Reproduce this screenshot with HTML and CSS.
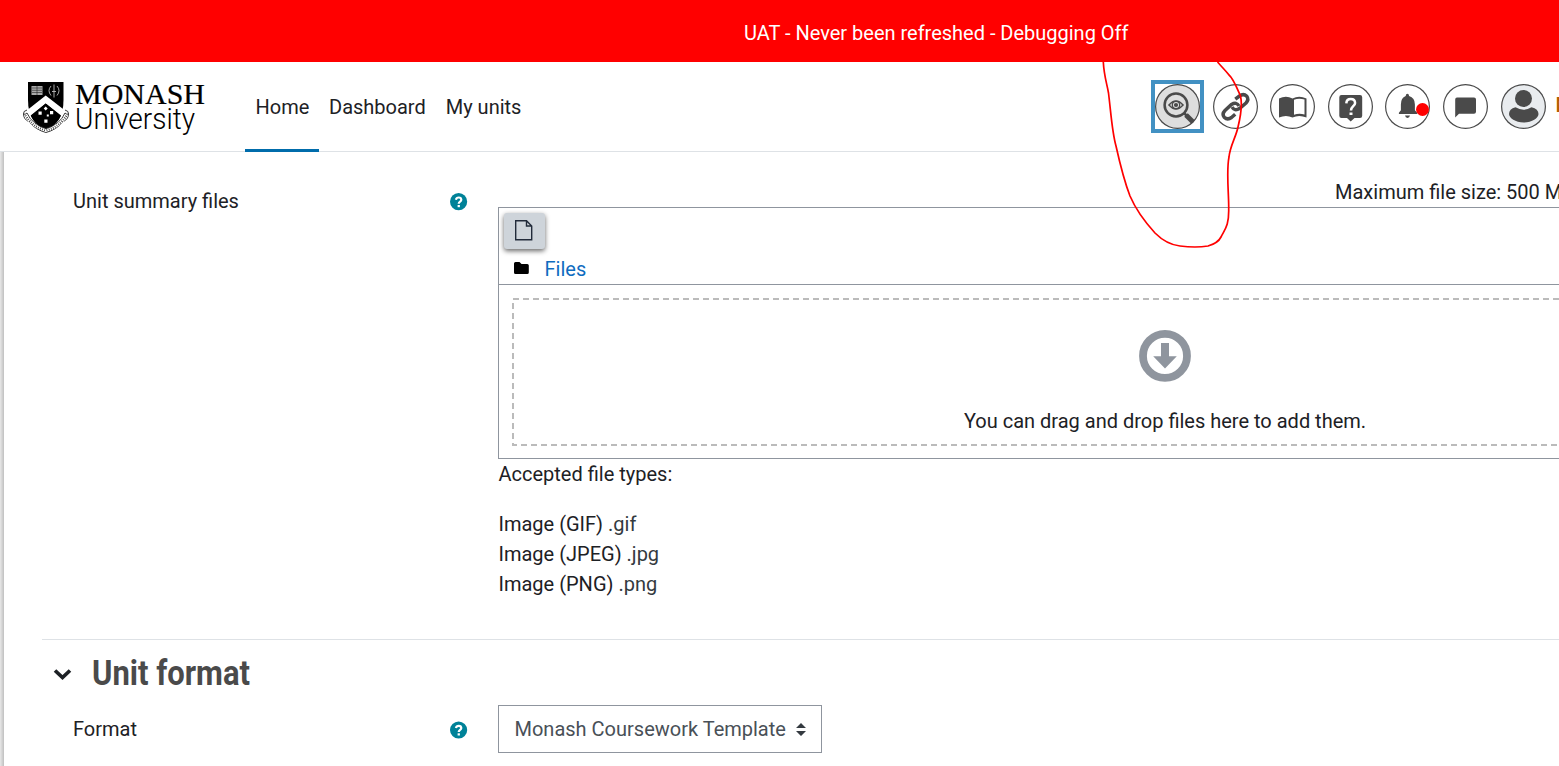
FILE: index.html
```html
<!DOCTYPE html>
<html lang="en">
<head>
<meta charset="utf-8">
<title>Edit unit settings</title>
<link rel="stylesheet" href="styles.css">
</head>
<body>
<div class="banner"><span>UAT - Never been refreshed - Debugging Off</span></div>
<header class="navbar">
  <svg class="logo" width="184" height="56" viewBox="22 80 184 56" role="img" aria-label="Monash University">
    <path d="M28 82h35.500v18c0 17-7 25-17.500 31-10.500-6-18-14-18-31z" fill="#000"/>
    <path d="M28 109.500 45.700 95.500l18 14-1.500 7.500-16.500-13.500L29.500 117z" fill="#fff"/>
    <path d="M45.700 103.500 61 115.500c-3 6.500-8.500 10.500-15.300 14.500-6.500-4-12-8-15-14.500z" fill="#000"/>
    <path d="M31.500 86h11v9h-11z" fill="#aaa"/>
    <g fill="none" stroke="#222" stroke-width=".6"><path d="M37 86v9M32 88h10M32 90.300h10M32 92.500h10"/></g>
    <path d="M54 84.500v13M51 86q-4 4.500 0 9.500M57 86q4 4.500 0 9.500M52 91.500h4" fill="none" stroke="#bbb" stroke-width=".9"/>
    <path d="m45.700 106.500 2 2-2 2-2-2zM38.500 111.500h3.200v3.200h-3.200zM50 111h3.200v3.200H50zM44.300 119.500h3.200v3.200h-3.200zM46.800 114.500h2v2h-2z" fill="#fff"/>
    <path d="M27 110q-4 1-3.500 4 1.500 1 3.500-1 5 11.500 19 15.500 14-4 19-15.500 2 2 3.500 1 .500-3-3.500-4M23.500 114q0 5 5 7.500Q36 130 46 132.500q10-2.500 17.500-11 5-2.500 5-7.500" fill="none" stroke="#222" stroke-width=".9"/>
    <path d="M25.500 115.500Q32 126.500 46 130.500 60 126.500 66.500 115.500" fill="none" stroke="#fff" stroke-width="2.600"/>
    <path d="M25.500 115.500Q32 126.500 46 130.500 60 126.500 66.500 115.500" fill="none" stroke="#333" stroke-width="2.200" stroke-dasharray=".8 1.400"/>
    <text class="logo-serif" x="75" y="103.700" textLength="130" lengthAdjust="spacingAndGlyphs">MONASH</text>
    <text class="logo-sans" x="75" y="129" textLength="120" lengthAdjust="spacingAndGlyphs">University</text>
  </svg>
  <nav class="menu"><a class="active">Home</a><a>Dashboard</a><a>My units</a></nav>
  <div class="tools">
    <span class="tool focus"><svg viewBox="0 0 45 45"><circle cx="21" cy="21" r="11.400" fill="none" stroke="#4a4a4a" stroke-width="2.500"/><path d="m29 29 2.500 2.500" stroke="#4a4a4a" stroke-width="2.500"/><path d="m31 31 7 7" stroke="#4a4a4a" stroke-width="5"/><path d="M14 21q7-8 14 0-7 8-14 0z" fill="none" stroke="#4a4a4a" stroke-width="1.600"/><circle cx="21" cy="21" r="3.700" fill="none" stroke="#4a4a4a" stroke-width="1.300"/><circle cx="21" cy="21" r="2.100" fill="#4a4a4a"/></svg></span>
    <span class="tool"><svg viewBox="0 0 45 45"><g fill="none" stroke="#4a4a4a" stroke-width="3.500"><path d="M19 23q2.500 4.500 7.500 1.500l6.500-5.500q3.200-3.500.8-6.700-3.300-3.200-7.300-.3l-4.200 3.200"/><path d="M26 22q-2.500-4.500-7.500-1.500l-6.500 6q-3.300 3.500-.8 6.700 3.300 3.200 7.300.3l3.700-3.300"/></g></svg></span>
    <span class="tool"><svg viewBox="0 0 45 45"><path d="M9 14.500q7-3.500 13.500 0Q29 11 36.500 14.500v19q-7.500-3-14 0-6.500-3-13.500 0z" fill="#4a4a4a"/><path d="M24 15.800q5-2.200 10.500-.200v14.900q-5.500-1.500-10.500.300z" fill="#fff"/></svg></span>
    <span class="tool"><svg viewBox="0 0 45 45"><path d="M13.500 11h18.500q2.200 0 2.200 2.200v18.600q0 2.200-2.200 2.200h-5.500l-3.800 3.500L19 34h-5.500q-2.200 0-2.200-2.200V13.200q0-2.200 2.200-2.200z" fill="#4a4a4a"/><path d="M18.300 19.300q.3-4.300 4.500-4.300t4.300 4c0 3-4.100 3.600-4.100 7.400" fill="none" stroke="#fff" stroke-width="2.500"/><path d="M21.500 28.500h3V31h-3z" fill="#fff"/></svg></span>
    <span class="tool"><svg viewBox="0 0 45 45"><path d="M22.400 9.800q1.500 0 1.700 2.200 5.800 1.700 5.800 8.500v5.700l2.300 2.500V30H13.900v-1.300l2-2.500v-5.700q0-6.800 4.800-8.500.2-2.200 1.700-2.200zM20 31.500h5q-.5 2.400-2.500 2.400T20 31.500z" fill="#4a4a4a"/></svg><i class="dot"></i></span>
    <span class="tool"><svg viewBox="0 0 45 45"><path d="M14 13.500h17q2 0 2 2v12.200q0 2-2 2H16L12.200 33.500v-18q0-2 1.800-2z" fill="#4a4a4a"/></svg></span>
    <span class="tool user"><svg viewBox="0 0 45 45"><circle cx="22.500" cy="14.500" r="8.500" fill="#4a4a4a"/><path d="M8 30q0-5 6.500-6.700 8 4.700 16 0Q37.500 25 37.500 30c0 4-6.700 8.500-14.800 8.500S8 34 8 30z" fill="#4a4a4a"/></svg></span>
    <span class="username">M</span>
  </div>
</header>
<main class="page">
  <div class="row summary">
    <label class="label">Unit summary files</label>
    <svg class="help" width="18" height="18" viewBox="0 0 18 18"><circle cx="8.600" cy="8.700" r="8.600" fill="#008298"/><path d="M5.900 6.700Q6.400 4.500 8.800 4.500t2.500 2.300C11.300 8.700 8.700 8.500 8.700 10.700" fill="none" stroke="#fff" stroke-width="2.200"/><path d="M7.600 12h2.300v2.200H7.600z" fill="#fff"/></svg>
    <div class="field">
      <div class="maxsize">Maximum file size: 500 MB</div>
      <div class="manager">
        <div class="toolbar">
          <button class="add"><svg width="18" height="21" viewBox="0 0 18 21"><path d="M.7.700h10.800L16.700 6v13.700H.7zM11.500.7V6h5.200" fill="none" stroke="#222b3a" stroke-width="1.400"/></svg></button>
          <div class="path"><svg width="15" height="13" viewBox="0 0 15 13"><path d="M1.500 0h4l2 2h5.800q1.500 0 1.500 1.500v7q0 1.500-1.500 1.500H1.500Q0 12 0 10.500v-9Q0 0 1.500 0z"/></svg><a>Files</a></div>
        </div>
        <div class="dropwrap"><div class="drop">
          <svg class="outline" width="1306" height="148"><rect x="1" y="1" width="1304" height="146"/></svg>
          <svg width="52" height="52" viewBox="0 0 52 52"><circle cx="26" cy="25.900" r="22" fill="none" stroke="#8f959e" stroke-width="7.800"/><path d="M22 13h8v13.300h7.800L26 38.500 14.200 26.300H22z" fill="#8f959e"/></svg>
          <div class="droptext">You can drag and drop files here to add them.</div>
        </div></div>
      </div>
      <div class="accepted">Accepted file types:</div>
      <div class="types"><div>Image (GIF) <small>.gif</small></div><div>Image (JPEG) <small>.jpg</small></div><div>Image (PNG) <small>.png</small></div></div>
    </div>
  </div>
  <section class="format">
    <h3><svg class="chevron" width="20" height="13" viewBox="0 0 20 13"><path d="m2 2.500 7.500 7L17 2.500" fill="none" stroke="#1d2125" stroke-width="3.700"/></svg><svg class="heading" width="162" height="44"><text x="0" y="31" textLength="158" lengthAdjust="spacingAndGlyphs">Unit format</text></svg></h3>
    <div class="row formatrow">
      <label class="label">Format</label>
      <svg class="help" width="18" height="18" viewBox="0 0 18 18"><circle cx="8.600" cy="9" r="8.600" fill="#008298"/><path d="M5.900 7Q6.400 4.800 8.800 4.800t2.500 2.300C11.300 9 8.700 8.800 8.700 11" fill="none" stroke="#fff" stroke-width="2.200"/><path d="M7.600 12.300h2.300v2.200H7.600z" fill="#fff"/></svg>
      <div class="select"><span>Monash Coursework Template</span><svg width="10" height="13" viewBox="0 0 10 13"><path d="M0 5 5 0l5 5zM0 8h10l-5 5z" fill="#343a40"/></svg></div>
    </div>
  </section>
</main>
<svg class="scribble" width="160" height="190" viewBox="1095 62 160 190"><path d="M1103.300 62C1104 76 1107 84 1108.500 93C1111 113 1112 132 1116 146C1120 164 1125 183 1130 196C1136 210 1145 222 1155 233C1163 241 1171 245 1180 246C1190 247.300 1202 247 1208 246C1215 244 1219 241 1221 237C1225 229 1229 226 1228.700 209C1229 194 1226 172 1229 157C1230 146 1236 137 1238 127C1241 115 1242.500 105 1240.500 96C1237 88 1233 78 1229 75C1226 71 1221 66 1217.500 62"/></svg>
</body>
</html>
```
FILE: styles.css
```css
* { box-sizing: border-box; }
body { margin: 0; width: 1559px; height: 766px; overflow: hidden; position: relative; background: #fff; color: #1d2125; font: 20px/30px Roboto, "Liberation Sans", sans-serif; }
svg { display: block; flex: none; }
.banner { height: 62px; background: #f00; color: #fff; padding: 18px 0 0 744px; white-space: nowrap; letter-spacing: -.01px; }
.navbar { height: 90px; display: flex; border-bottom: 1px solid #dee2e6; padding-left: 22px; }
.logo { margin-top: 18px; }
.logo-serif { font: 30px "Liberation Serif", serif; stroke: #000; stroke-width: .2px; }
.logo-sans { font: 300 30px Roboto, sans-serif; }
.menu { display: flex; margin-left: 39px; height: 90px; }
.menu a { padding: 30px 10px 0; white-space: nowrap; }
.menu a:first-child { width: 74px; padding-left: 10.5px; }
.menu .active { border-bottom: 3px solid #006cab; }
.tools { display: flex; align-items: flex-start; gap: 12.6px; margin-left: auto; width: 404px; padding-top: 22px; flex: none; }
.tool { flex: none; width: 45px; height: 45px; border-radius: 50%; position: relative; box-shadow: inset 0 0 0 1.2px #4a4a4a; }
.focus { background: #dedede; }
.focus::after { content: ""; position: absolute; inset: -4px; border: 4px solid #4291c3; }
.dot { position: absolute; width: 13px; height: 13px; border-radius: 50%; background: #f00; left: 31px; top: 19px; }
.user { background: #e9ecef; }
.username { color: #b35c00; font-weight: 500; line-height: 42px; margin-left: -2.6px; }
.page { height: 614px; border-left: 4px solid #d5d5d5; border-image: linear-gradient(90deg, #e8e8e8, #c0c0c0 4px) 4; padding-left: 38px; overflow: hidden; }
.row { display: flex; padding-left: 31px; }
.summary { height: 487px; padding-top: 25px; }
.label { width: 377px; flex: none; padding-top: 9px; }
.help { margin-top: 16px; margin-right: 30px; }
.field { width: 1334px; flex: none; }
.maxsize { padding-left: 837px; white-space: nowrap; }
.manager { border: 1px solid #8f959e; height: 252px; }
.toolbar { height: 77px; border-bottom: 1px solid #8f959e; padding: 5px 4px 0 4.5px; }
.add { width: 41px; height: 36px; border: 0; border-radius: 3px; background: #ced4da; box-shadow: 0 2px 5px #0009; display: flex; justify-content: center; align-items: center; padding: 0 0 2px; }
.path { display: flex; gap: 15.5px; align-items: center; padding: 5px 0 0 10.5px; }
.path svg { margin-top: -1px; }
.path a { color: #0f6cbf; }
.dropwrap { padding: 13px; }
.drop { height: 148px; display: flex; flex-direction: column; align-items: center; position: relative; padding-top: 32px; }
.outline { position: absolute; inset: 0; fill: none; stroke: #bbb; stroke-width: 2px; stroke-dasharray: 6 4; }
.droptext { margin-top: 24px; }
.accepted, .types { padding-left: .5px; }
.types { margin-top: 20px; }
.types small { font-size: 20px; color: #343a40; }
.format { border-top: 1px solid #dee2e6; }
h3 { margin: 0; display: flex; height: 65px; padding: 14px 0 0 11px; }
.chevron { margin-top: 14px; margin-right: 19px; }
.heading { font: 700 35px Roboto, sans-serif; fill: #4a4a4a; }
.formatrow .select { width: 324px; height: 48px; border: 1px solid #8f959e; display: flex; align-items: center; justify-content: space-between; padding: 0 15px 0 15.5px; color: #495057; white-space: nowrap; }
.scribble { position: absolute; left: 1095px; top: 62px; fill: none; stroke: #f00; stroke-width: 1.7px; }
```
